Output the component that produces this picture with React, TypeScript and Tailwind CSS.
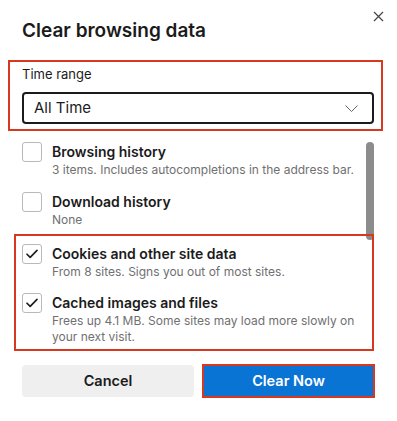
const rows = [
    { label: 'Browsing history', desc: '3 items. Includes autocompletions in the address bar.', checked: false },
    { label: 'Download history', desc: 'None', checked: false },
];

const picked = [
    { label: 'Cookies and other site data', desc: 'From 8 sites. Signs you out of most sites.', checked: true },
    { label: 'Cached images and files', desc: 'Frees up 4.1 MB. Some sites may load more slowly on your next visit.', checked: true },
];

const Check = ({ checked }: { checked: boolean }) => (
    <div className="w-[20px] h-[20px] shrink-0 rounded-[3px] border border-[#b9b9b9] bg-white flex items-center justify-center">
        {checked && (
            <svg width="12" height="10" viewBox="0 0 12 10" fill="none">
                <path d="M1 5.2 4.2 8.4 11 1.4" stroke="#1b1b1b" strokeWidth="1.6" strokeLinecap="round" strokeLinejoin="round" />
            </svg>
        )}
    </div>
);

const Row = ({ label, desc, checked }: { label: string; desc: string; checked: boolean }) => (
    <div className="flex gap-[10px]">
        <Check checked={checked} />
        <div className="w-[308px]">
            <div className="text-[14px] leading-[20px] font-semibold text-[#1b1b1b]">{label}</div>
            <div className="text-[12px] leading-[16px] text-[#707070]">{desc}</div>
        </div>
    </div>
);

export default function App() {
    return (
        <div className="relative w-[397px] h-[421px] bg-white flex flex-col font-['Inter','Noto_Sans',sans-serif] text-[#1b1b1b]">
            {/* close */}
            <button className="absolute left-[372px] top-[10px] w-[12px] h-[12px] flex items-center justify-center">
                <svg width="11" height="11" viewBox="0 0 11 11">
                    <path d="M1 1 10 10M10 1 1 10" stroke="#444" strokeWidth="1.2" />
                </svg>
            </button>

            <h1 className="mt-[19px] ml-[22px] h-[24px] text-[19px] leading-[24px] font-semibold">Clear browsing data</h1>

            <div className="mt-[17px] ml-[8px] w-[375px] h-[71px] border-2 border-[#d7381e] pl-[12px] pr-[7px] pt-[4px]">
                <div className="text-[13px] leading-[16px]">Time range</div>
                <div className="mt-[10px] h-[32px] border-2 border-[#1b1b1b] rounded-[4px] pl-[10px] pr-[14px] flex items-center justify-between">
                    <span className="text-[15px]">All Time</span>
                    <svg width="13" height="7" viewBox="0 0 13 7" fill="none">
                        <path d="M0.5 0.5 6.5 6.5 12.5 0.5" stroke="#666" strokeWidth="1" />
                    </svg>
                </div>
            </div>

            <div className="relative flex-1">
                <div className="absolute left-[366px] top-[11px] w-[8px] h-[98px] rounded-full bg-[#8c8c8c]" />
                <div className="pt-[11px] pl-[22px] flex flex-col gap-[14px]">
                    {rows.map((r) => (
                        <Row key={r.label} {...r} />
                    ))}
                </div>
                <div className="relative mt-[6px] ml-[14px] w-[360px] h-[117px] border-2 border-[#d7381e] pl-[6px] pt-[8px] flex flex-col gap-[13px]">
                    {picked.map((r) => (
                        <Row key={r.label} {...r} />
                    ))}
                </div>
                <div className="mt-[13px] ml-[22px] flex items-center gap-[8px]">
                    <button className="w-[172px] h-[32px] rounded-[4px] bg-[#efefef] text-[14.5px] font-semibold text-[#1b1b1b]">Cancel</button>
                    <button className="w-[173px] h-[34px] border-2 border-[#d7381e] bg-[#0a74d4] text-[14.5px] font-semibold text-white">Clear Now</button>
                </div>
            </div>
        </div>
    );
}
